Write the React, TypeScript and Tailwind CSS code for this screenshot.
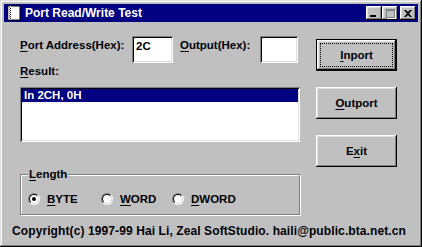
import React from 'react';

const raised =
  'bg-[#c0c0c0] shadow-[inset_-1px_-1px_0_#000,inset_1px_1px_0_#fff,inset_-2px_-2px_0_#808080,inset_2px_2px_0_#dfdfdf]';
const sunken =
  'bg-white shadow-[inset_1px_1px_0_#808080,inset_-1px_-1px_0_#fff,inset_2px_2px_0_#000,inset_-2px_-2px_0_#dfdfdf]';

function U({ children }: { children: React.ReactNode }) {
  return <span className="underline underline-offset-[2px]">{children}</span>;
}

function TitleButton({ children }: { children: React.ReactNode }) {
  return <div className={`w-[16px] h-[14px] flex items-center justify-center ${raised}`}>{children}</div>;
}

function Radio({ checked, label }: { checked?: boolean; label: React.ReactNode }) {
  return (
    <div className="flex items-center gap-[7px]">
      <div className="w-[12px] h-[12px] rounded-full border border-t-[#808080] border-l-[#808080] border-b-white border-r-white">
        <div className="w-full h-full rounded-full bg-white border border-t-black border-l-black border-b-[#dfdfdf] border-r-[#dfdfdf] flex items-center justify-center">
          {checked && <div className="w-[4px] h-[4px] rounded-full bg-black" />}
        </div>
      </div>
      <span>{label}</span>
    </div>
  );
}

function Button({ label, isDefault }: { label: React.ReactNode; isDefault?: boolean }) {
  if (isDefault) {
    return (
      <div className="w-[81px] h-[32px] border border-black">
        <div className={`w-full h-full p-[3px] ${raised}`}>
          <div className="w-full h-full border border-dotted border-black flex items-center justify-center">
            {label}
          </div>
        </div>
      </div>
    );
  }
  return <div className={`w-[81px] h-[32px] flex items-center justify-center ${raised}`}>{label}</div>;
}

export default function App() {
  return (
    <div className="w-[422px] h-[247px] bg-[#c0c0c0] p-[4px] flex flex-col font-['Liberation_Sans',Arial,sans-serif] font-bold text-[11.5px] leading-[14px] text-black shadow-[inset_-1px_-1px_0_#000,inset_1px_1px_0_#dfdfdf,inset_-2px_-2px_0_#808080,inset_2px_2px_0_#fff]">
      {/* title bar */}
      <div className="h-[18px] bg-[#000080] flex items-center pl-[2px] pr-[2px]">
        <svg width="16" height="16" viewBox="0 0 16 16">
          <rect x="2" y="1" width="12" height="14" fill="#fff" stroke="#000" strokeWidth="1" />
          <rect x="2.5" y="1.5" width="3" height="13" fill="#fff" />
          {[3, 5, 7, 9, 11, 13].map((y) => (
            <rect key={y} x="4" y={y} width="1" height="1" fill="#000" />
          ))}
          {[2, 4, 6, 8, 10, 12].map((y) => (
            <rect key={y} x="3" y={y} width="1" height="1" fill="#808080" />
          ))}
        </svg>
        <span className="ml-[3px] text-white text-[12px]">Port Read/Write Test</span>
        <div className="ml-auto flex items-center">
          <TitleButton>
            <div className="w-[6px] h-[2px] bg-black mt-[6px] -ml-[2px]" />
          </TitleButton>
          <TitleButton>
            <div className="w-[9px] h-[9px] border border-t-2 border-[#808080] shadow-[1px_1px_0_#fff]" />
          </TitleButton>
          <div className="w-[2px]" />
          <TitleButton>
            <svg width="8" height="7" viewBox="0 0 8 7">
              <path d="M0 0h2l2 2 2-2h2L5 3.5 8 7H6L4 5 2 7H0l3-3.5z" fill="#000" />
            </svg>
          </TitleButton>
        </div>
      </div>

      {/* body */}
      <div className="flex pt-[14px] pl-[16px]">
        <div className="w-[280px] flex flex-col">
          <div className="flex items-start h-[27px]">
            <span className="w-[112px] mt-[2px]">
              <U>P</U>ort Address(Hex):
            </span>
            <div className={`w-[41px] h-[27px] pl-[4px] pt-[3px] ${sunken}`}>2C</div>
            <span className="ml-[7px] w-[80px] mt-[2px]">
              <U>O</U>utput(Hex):
            </span>
            <div className={`w-[38px] h-[27px] ${sunken}`} />
          </div>
          <span className="mt-[1px]">
            <U>R</U>esult:
          </span>
          <div className={`mt-[9px] h-[55px] p-[2px] ${sunken}`}>
            <div className="h-[13px] bg-[#000080] text-white pl-[2px] leading-[13px]">In 2CH, 0H</div>
          </div>
          <div className="mt-[32px] relative h-[41px] border border-[#808080] shadow-[1px_1px_0_#fff,inset_1px_1px_0_#fff] flex items-center pl-[7px]">
            <span className="absolute -top-[8px] left-[7px] px-[1px] bg-[#c0c0c0]">
              <U>L</U>ength
            </span>
            <div className="w-[73px] mt-[9px]">
              <Radio checked label={<><U>B</U>YTE</>} />
            </div>
            <div className="w-[71px] mt-[9px]">
              <Radio label={<><U>W</U>ORD</>} />
            </div>
            <div className="mt-[9px]">
              <Radio label={<><U>D</U>WORD</>} />
            </div>
          </div>
        </div>
        <div className="ml-[16px] pt-[3px] flex flex-col gap-[16px]">
          <Button isDefault label={<><U>I</U>nport</>} />
          <Button label={<><U>O</U>utport</>} />
          <Button label={<>E<U>x</U>it</>} />
        </div>
      </div>

      <div className="mt-[9px] pl-[8px] text-[12px] tracking-[0.1px]">Copyright(c) 1997-99 Hai Li, Zeal SoftStudio. haili@public.bta.net.cn</div>
    </div>
  );
}
